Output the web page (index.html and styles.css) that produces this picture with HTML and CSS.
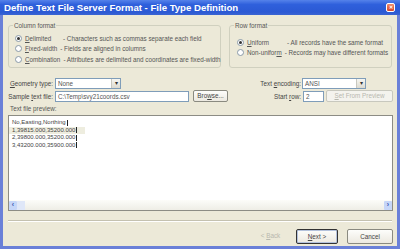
FILE: index.html
```html
<!DOCTYPE html>
<html lang="en">
<head>
    <meta charset="UTF-8">
    <title>Define Text File Server Format - File Type Definition</title>
    <link rel="stylesheet" href="styles.css">
</head>
<body>
    <div class="window">

        <div class="titlebar">
            <span class="title">Define Text File Server Format - File Type Definition</span>
            <span class="close">&#x2715;</span>
        </div>

        <div class="content">

            <div class="groups">
                <div class="group col-group">
                    <span class="legend">Column format</span>
                    <div class="opt">
                        <span class="radio on"></span>
                        <span class="name w-delim"><u>D</u>elimited</span>
                        <span>- Characters such as commas separate each field</span>
                    </div>
                    <div class="opt">
                        <span class="radio"></span>
                        <span class="name"><u>F</u>ixed-width</span>
                        <span>- Fields are aligned in columns</span>
                    </div>
                    <div class="opt">
                        <span class="radio"></span>
                        <span class="name"><u>C</u>ombination</span>
                        <span>- Attributes are delimited and coordinates are fixed-width</span>
                    </div>
                </div>

                <div class="group row-group">
                    <span class="legend">Row format</span>
                    <div class="opt">
                        <span class="radio on"></span>
                        <span class="name w-uni"><u>U</u>niform</span>
                        <span>- All records have the same format</span>
                    </div>
                    <div class="opt">
                        <span class="radio"></span>
                        <span class="name">Non-unifor<u>m</u></span>
                        <span>- Records may have different formats</span>
                    </div>
                </div>
            </div>

            <div class="fields">
                <div class="left-fields">
                    <div class="field">
                        <span class="lbl"><span><u>G</u>eometry type:</span></span>
                        <div class="combo geo">
                            <span>None</span>
                            <span class="drop">&#9662;</span>
                        </div>
                    </div>
                    <div class="field">
                        <span class="lbl"><span>Sample <u>t</u>ext file:</span></span>
                        <div class="edit path">C:\Temp\svy21coords.csv</div>
                        <div class="btn browse">Bro<u>w</u>se...</div>
                    </div>
                </div>

                <div class="right-fields">
                    <div class="field">
                        <span class="lbl"><span>Text <u>e</u>ncoding:</span></span>
                        <div class="combo enc">
                            <span>ANSI</span>
                            <span class="drop">&#9662;</span>
                        </div>
                    </div>
                    <div class="field">
                        <span class="lbl"><span>Start <u>r</u>ow:</span></span>
                        <div class="edit startrow">2</div>
                        <div class="btn disabled preview-btn"><u>S</u>et From Preview</div>
                    </div>
                </div>
            </div>

            <div class="preview-label">Text file preview:</div>

            <div class="preview">
                <div class="lines">
                    <div class="line">No,Easting,Northing<span class="cur"></span></div>
                    <div class="line sel">1,39815.000,35200.000<span class="cur"></span></div>
                    <div class="line">2,39800.000,35200.000<span class="cur"></span></div>
                    <div class="line">3,43200.000,35900.000<span class="cur"></span></div>
                </div>
                <div class="hscroll">
                    <span class="arrow">&#8249;</span>
                    <span class="thumb"></span>
                    <span class="track"></span>
                    <span class="arrow">&#8250;</span>
                </div>
            </div>

            <div class="separator"></div>

            <div class="buttons">
                <div class="btn disabled back">&lt; <u>B</u>ack</div>
                <div class="btn default next"><u>N</u>ext &gt;</div>
                <div class="btn cancel">Cancel</div>
            </div>

        </div>
    </div>
</body>
</html>
```

FILE: styles.css
```css
body{
    margin: 0;
    font-family: "Liberation Sans", Arial, sans-serif;
    font-size: 6.3px;
    color: #444;
}

.window{
    width: 400px;
    height: 249px;
    box-sizing: border-box;
    background-color: #6a80d8;
    padding: 0 3px 3px 3px;

    display: flex;
    flex-direction: column;
}

.titlebar{
    height: 15px;
    margin: 0 -3px;
    padding: 0 4px 0 4px;
    background: linear-gradient(to bottom, #5582ea 0%, #2f60dc 30%, #2b59d4 80%, #3a64d2 100%);

    display: flex;
    align-items: center;
    justify-content: space-between;
}

.title{
    color: #fff;
    font-weight: bold;
    font-size: 9.6px;
}

.close{
    width: 7px;
    height: 7px;
    border: 1px solid #fff;
    border-radius: 2px;
    background: linear-gradient(#ef8a6a, #d8452a);
    color: #fff;
    font-size: 5px;
    font-weight: bold;
    line-height: 7px;
    text-align: center;
    margin-right: 1px;
}

.content{
    flex: 1;
    background-color: #ece9d8;
    padding: 10px 4px 0 5px;

    display: flex;
    flex-direction: column;
}

/* group boxes */
.groups{
    display: flex;
    gap: 8px;
}

.group{
    position: relative;
    border: 1px solid #d0d0bf;
    border-radius: 3px;
    height: 43px;
    box-sizing: border-box;
    padding: 7px 0 0 6px;
}

.col-group{
    width: 213px;
}

.row-group{
    width: 163px;
    padding-top: 11px;
    padding-left: 7px;
}

.legend{
    position: absolute;
    top: -4px;
    left: 4px;
    padding: 0 1px;
    background-color: #ece9d8;
    color: #555;
    line-height: 7px;
}

.opt{
    height: 10.5px;
    display: flex;
    align-items: center;
    white-space: nowrap;
    color: #555;
}

.radio{
    width: 5px;
    height: 5px;
    border: 1px solid #8a9aa8;
    border-radius: 50%;
    background-color: #fff;
    margin-right: 3px;
    position: relative;
    flex: none;
}

.radio.on::after{
    content: "";
    position: absolute;
    left: 1px;
    top: 1px;
    width: 3px;
    height: 3px;
    border-radius: 50%;
    background-color: #333;
}

.name{
    margin-right: 3px;
}

.w-delim{
    width: 35px;
}

.w-uni{
    width: 37px;
}

/* form fields */
.fields{
    margin-top: 9px;
    display: flex;
    justify-content: space-between;
}

.left-fields,
.right-fields{
    display: flex;
    flex-direction: column;
    gap: 1px;
}

.field{
    height: 12px;
    display: flex;
    align-items: center;
}

.lbl{
    display: flex;
    justify-content: flex-end;
    white-space: nowrap;
    color: #444;
}

.left-fields{
    margin-left: -1px;
}

.left-fields .lbl{
    width: 46px;
    margin-right: 2px;
}

.right-fields .lbl{
    width: 60px;
    margin-right: 1px;
}

.combo,
.edit{
    height: 11px;
    box-sizing: border-box;
    border: 1px solid #7f9db9;
    background-color: #fff;
    padding-left: 2px;
    line-height: 9px;
    color: #555;
}

.combo{
    display: flex;
    justify-content: space-between;
    align-items: center;
    padding-right: 0;
}

.drop{
    width: 8px;
    height: 9px;
    background: linear-gradient(#f6f6f2, #dcdad0);
    border-left: 1px solid #c8c8c0;
    font-size: 6px;
    line-height: 9px;
    text-align: center;
    color: #333;
}

.geo{
    width: 66px;
}

.enc{
    width: 64px;
}

.path{
    width: 134px;
}

.startrow{
    width: 21px;
    margin-left: 1px;
}

.btn{
    height: 12px;
    box-sizing: border-box;
    border: 1px solid #8a8a80;
    border-radius: 2px;
    background: linear-gradient(#fdfdfb, #ece9e0);
    line-height: 10px;
    text-align: center;
    color: #444;
}

.browse{
    width: 35px;
    margin-left: 4px;
}

.preview-btn{
    width: 67px;
    margin-left: 2px;
}

.btn.disabled{
    color: #b8b8ae;
    border-color: #c8c8be;
    background: #f4f3ee;
}

/* preview */
.preview-label{
    margin-top: 2px;
    height: 10px;
    line-height: 10px;
    padding-left: 2px;
    color: #555;
}

.preview{
    margin-top: 1px;
    height: 94px;
    border: 1px solid #8c8c84;
    background-color: #fff;
    font-size: 6px;

    display: flex;
    flex-direction: column;
}

.lines{
    flex: 1;
    padding: 3px 0 0 0;
}

.line{
    height: 7.5px;
    line-height: 7.5px;
    padding-left: 3px;
    color: #444;
    display: flex;
    align-items: center;
}

.line.sel{
    background-color: #eeeddf;
    width: 73px;
}

.cur{
    width: 1px;
    height: 6px;
    background-color: #222;
    margin-left: 1px;
}

.hscroll{
    height: 10px;
    background: linear-gradient(#fcfcf9, #eeede6);
    display: flex;
    align-items: center;
}

.arrow{
    width: 8px;
    height: 9px;
    border-radius: 1px;
    background-color: #c6d6f8;
    color: #3a58b0;
    font-size: 7px;
    font-weight: bold;
    line-height: 8px;
    text-align: center;
}

.thumb{
    width: 8px;
    height: 9px;
    background-color: #dfe7f8;
}

.track{
    flex: 1;
}

.separator{
    margin-top: 9px;
    margin-right: 1px;
    height: 0;
    border-top: 1px solid #c4c1b0;
    border-bottom: 1px solid #fff;
}

.buttons{
    margin-top: 7px;
    display: flex;
    justify-content: flex-end;
}

.buttons .btn{
    height: 15px;
    line-height: 13px;
}

.back{
    width: 31px;
    margin-right: 10px;
}

.btn.disabled.back{
    border: none;
    background: transparent;
}

.next{
    width: 42px;
    margin-right: 9px;
}

.btn.default{
    border: 1px solid #333;
    box-shadow: inset 0 0 0 1px #b4c2dc;
}

.cancel{
    width: 46px;
}
```
